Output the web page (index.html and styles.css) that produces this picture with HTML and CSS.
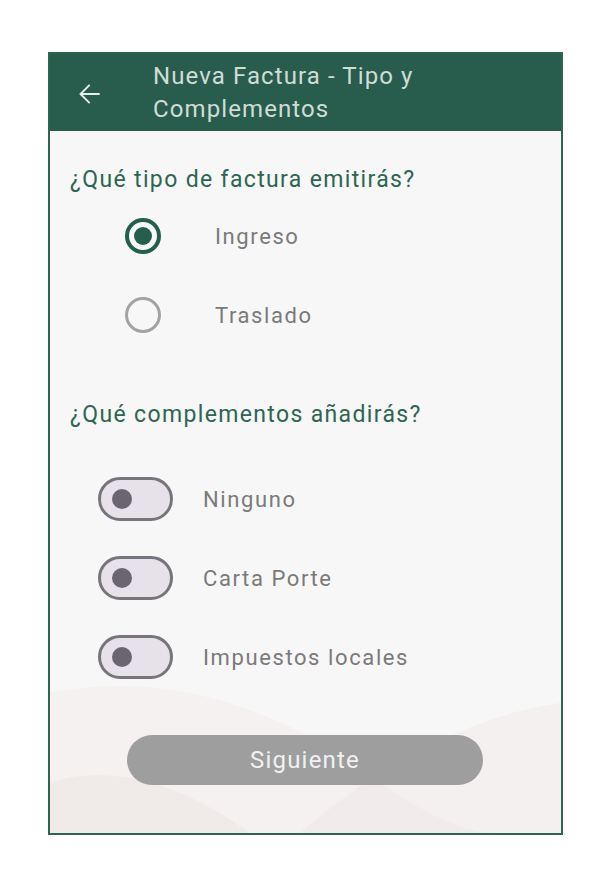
FILE: index.html
```html
<!DOCTYPE html>
<html lang="es">
<head>
<meta charset="utf-8">
<title>Nueva Factura - Tipo y Complementos</title>
<link rel="stylesheet" href="styles.css">
</head>
<body>
<div class="frame">
  <header class="appbar">
    <svg class="back" width="32" height="32" viewBox="0 0 24 24" aria-hidden="true">
      <path d="M20 11.2H7.4l5.6-5.6-1-1L4.6 12l7.4 7.4 1-1-5.6-5.6H20z" fill="#e8efeb"/>
    </svg>
    <h1 class="title">Nueva Factura - Tipo y<br>Complementos</h1>
  </header>
  <main class="content">
    <svg class="waves" viewBox="0 0 511 160" preserveAspectRatio="none" aria-hidden="true">
      <path d="M0 20 C 120 -5 240 40 330 110 C 380 145 420 160 440 160 L0 160 Z" fill="#efe9e6" opacity="0.45"/>
      <path d="M511 30 C 430 40 330 90 250 160 L511 160 Z" fill="#ede7e4" opacity="0.45"/>
      <path d="M0 110 C 60 90 130 110 200 160 L0 160 Z" fill="#ebe3e0" opacity="0.5"/>
    </svg>
    <h2 class="question">¿Qué tipo de factura emitirás?</h2>
    <div class="radios">
      <label class="radio-row">
        <span class="radio checked"></span>
        <span class="opt">Ingreso</span>
      </label>
      <label class="radio-row">
        <span class="radio"></span>
        <span class="opt">Traslado</span>
      </label>
    </div>
    <h2 class="question q2">¿Qué complementos añadirás?</h2>
    <div class="toggles">
      <div class="toggle-row">
        <span class="switch"><span class="knob"></span></span>
        <span class="opt">Ninguno</span>
      </div>
      <div class="toggle-row">
        <span class="switch"><span class="knob"></span></span>
        <span class="opt">Carta Porte</span>
      </div>
      <div class="toggle-row">
        <span class="switch"><span class="knob"></span></span>
        <span class="opt">Impuestos locales</span>
      </div>
    </div>
    <button class="next" type="button">Siguiente</button>
  </main>
</div>
</body>
</html>
```
FILE: styles.css
```css
* { box-sizing: border-box; }
html, body { margin: 0; padding: 0; background: #ffffff; }
body { font-family: Roboto, "Noto Sans", "Liberation Sans", sans-serif; }

.frame {
  margin: 52px 0 0 48px;
  width: 515px;
  height: 783px;
  border: 2px solid #2a6751;
  display: flex;
  flex-direction: column;
  background: #f7f7f7;
}

.appbar {
  height: 77px;
  background: #285d4d;
  display: flex;
  align-items: center;
  padding-left: 23px;
  flex-shrink: 0;
}
.back { width: 32px; height: 32px; margin-top: 2px; flex-shrink: 0; }
.title {
  margin: 0 0 0 48px;
  font-weight: 400;
  font-size: 24px;
  line-height: 33px;
  letter-spacing: 1.1px;
  color: #cfddd6;
}

.content {
  position: relative;
  flex: 1;
  display: flex;
  flex-direction: column;
  padding: 35px 0 0 20px;
  overflow: hidden;
}
.content > *:not(.waves) { position: relative; }
.waves {
  position: absolute;
  left: 0;
  bottom: 0;
  width: 100%;
  height: 160px;
}

.question {
  margin: 0;
  font-weight: 400;
  font-size: 23px;
  line-height: 28px;
  letter-spacing: 1.35px;
  color: #2c6652;
}
.q2 { margin-top: 68px; }

.radios { display: flex; flex-direction: column; gap: 43px; margin-top: 24px; padding-left: 55px; }
.radio-row { display: flex; align-items: center; height: 36px; }
.radio {
  width: 36px; height: 36px;
  border-radius: 50%;
  border: 3px solid #a3a3a3;
  display: flex; align-items: center; justify-content: center;
  flex-shrink: 0;
}
.radio.checked { border: 4px solid #245e4c; }
.radio.checked::after {
  content: "";
  width: 18px; height: 18px;
  border-radius: 50%;
  background: #245e4c;
}
.opt {
  font-size: 22px;
  color: #7a7a7a;
  letter-spacing: 1.6px;
}
.radio-row .opt { margin-left: 54px; }

.toggles { display: flex; flex-direction: column; gap: 35px; margin-top: 48px; padding-left: 28px; }
.toggle-row { display: flex; align-items: center; height: 44px; }
.switch {
  width: 75px; height: 44px;
  border-radius: 22px;
  border: 3px solid #78747c;
  background: #e7e1ea;
  display: flex; align-items: center;
  padding-left: 11px;
  flex-shrink: 0;
}
.knob { width: 20px; height: 20px; border-radius: 50%; background: #6a6670; }
.toggle-row .opt { margin-left: 30px; }

.next {
  margin: 56px 0 0 57px;
  width: 356px;
  height: 50px;
  border: none;
  border-radius: 25px;
  background: #9e9e9e;
  color: #f1f1f1;
  font-family: Roboto, "Noto Sans", "Liberation Sans", sans-serif;
  font-size: 24px;
  letter-spacing: 1.2px;
  padding: 0;
}
```
